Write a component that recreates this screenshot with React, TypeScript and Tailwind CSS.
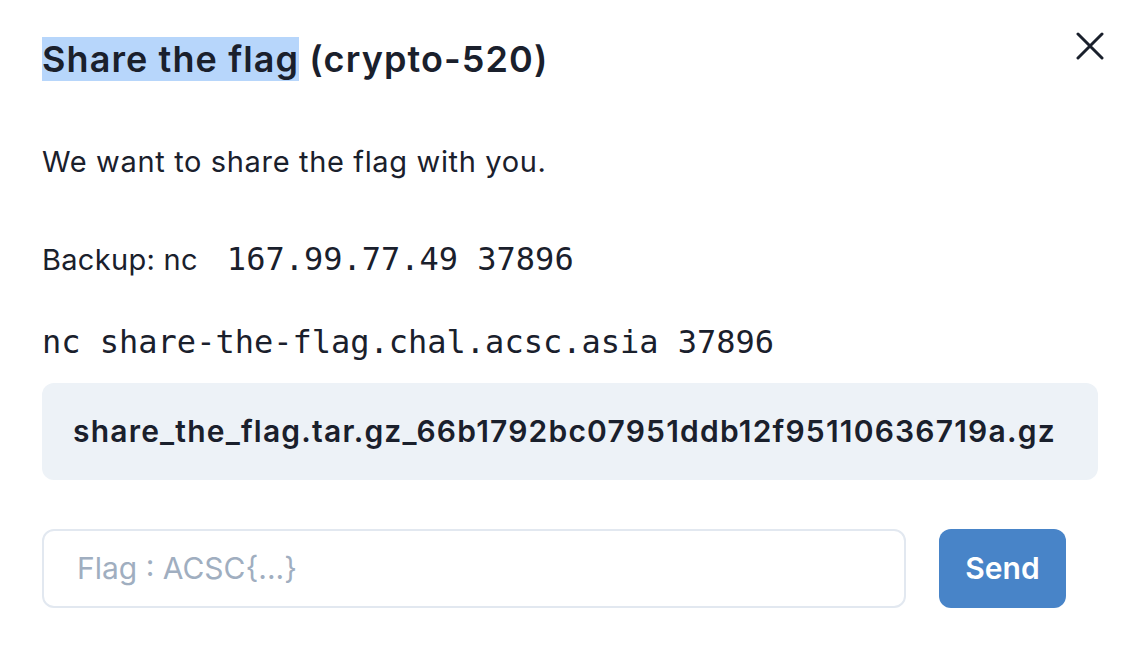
import React from "react";

export default function App() {
  return (
    <div className="w-[1136px] h-[658px] bg-white text-[#1a202c] relative overflow-hidden" style={{ fontFamily: "Inter, 'Noto Sans', sans-serif" }}>
      <button className="absolute left-[1076px] top-[32px] w-[28px] h-[28px]" aria-label="Close">
        <svg width="28" height="28" viewBox="0 0 28 28" fill="none">
          <path d="M2 2L26 26M26 2L2 26" stroke="#1a202c" strokeWidth="3" strokeLinecap="round" />
        </svg>
      </button>
      <div className="flex flex-col pl-[42px] pr-[38px]">
        <h1 className="mt-[36px] text-[36px] leading-[46px] font-semibold tracking-[1.1px]">
          <span className="bg-[#b7d6fb]">Share the flag</span> (crypto-520)
        </h1>
        <p className="mt-[60px] text-[29px] leading-[40px] tracking-[0.65px]">We want to share the flag with you.</p>
        <p className="mt-[57px] text-[29px] leading-[40px] tracking-[0.3px] flex items-baseline">
          <span>Backup: nc</span>
          <span className="ml-[29px] text-[32px] tracking-normal" style={{ fontFamily: "'DejaVu Sans Mono', monospace" }}>167.99.77.49 37896</span>
        </p>
        <p className="mt-[42px] text-[32px] leading-[40px]" style={{ fontFamily: "'DejaVu Sans Mono', monospace" }}>
          nc share-the-flag.chal.acsc.asia 37896
        </p>
        <div className="mt-[21px] h-[97px] rounded-[12px] bg-[#edf2f7] flex items-center pl-[31px]">
          <span className="text-[30px] font-semibold tracking-[1.2px]">share_the_flag.tar.gz_66b1792bc07951ddb12f95110636719a.gz</span>
        </div>
        <div className="mt-[49px] flex items-center">
          <div className="w-[864px] h-[79px] rounded-[12px] border-2 border-[#e2e8f0] flex items-center pl-[33px]">
            <input className="w-full outline-none text-[30px] placeholder:text-[#a0aec0] bg-transparent" placeholder="Flag : ACSC{...}" />
          </div>
          <button className="ml-[33px] w-[127px] h-[79px] rounded-[12px] bg-[#4884c8] text-white text-[30px] font-semibold">Send</button>
        </div>
      </div>
    </div>
  );
}
